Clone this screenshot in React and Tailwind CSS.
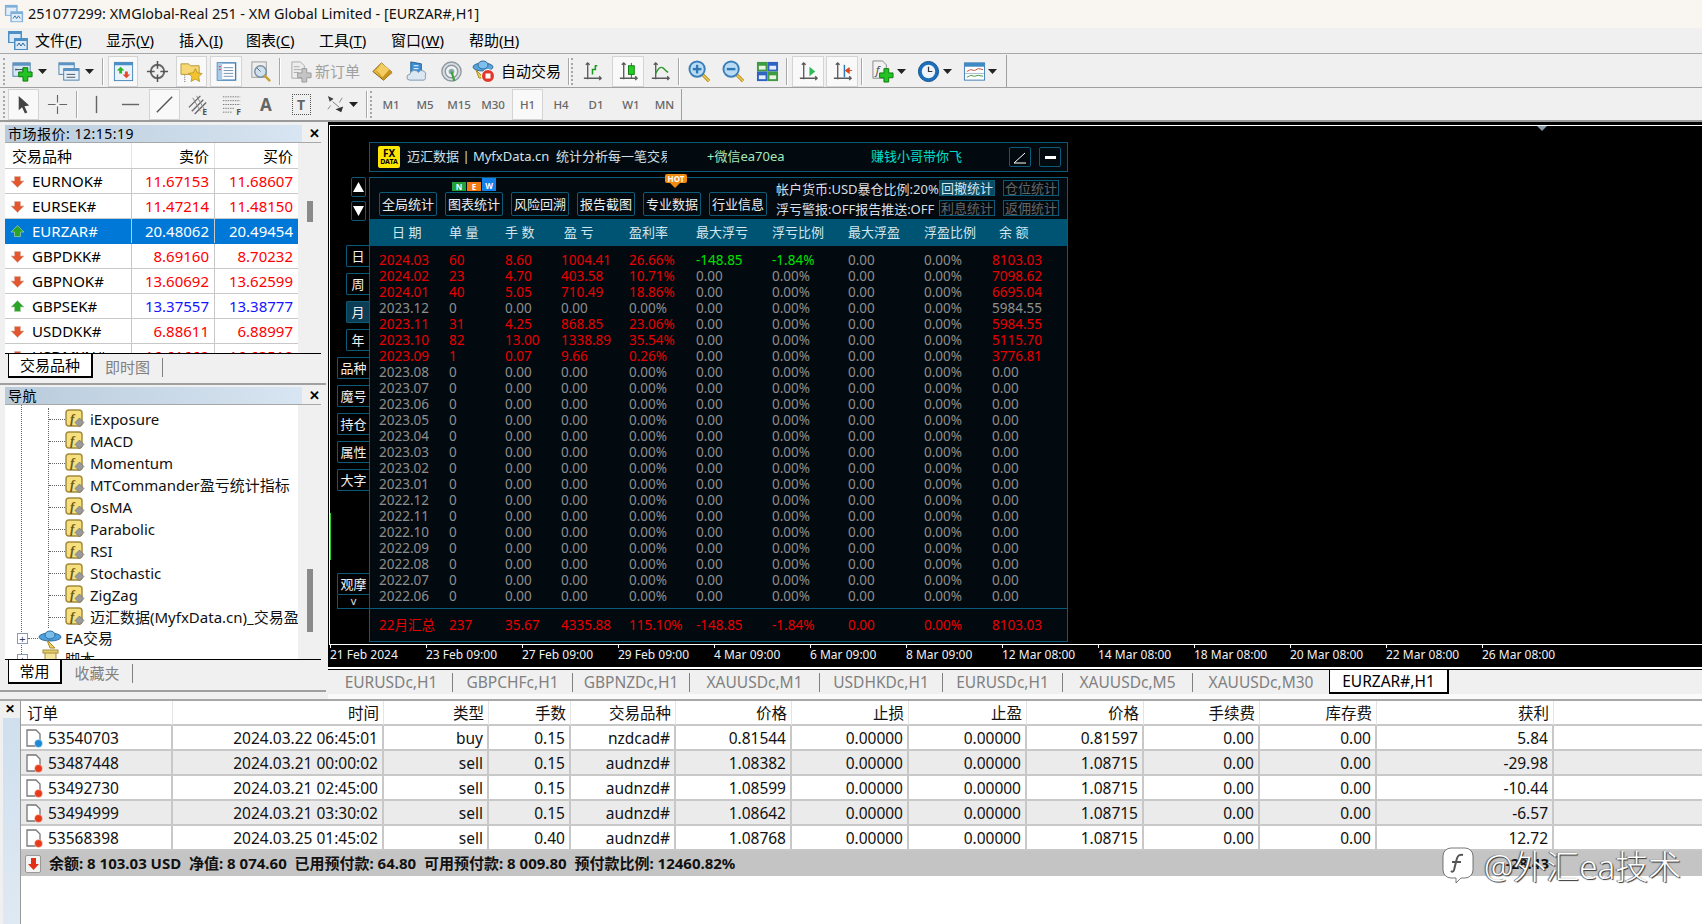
import React from "react";

const FONT = '"Noto Sans", "Noto Sans CJK SC", sans-serif';

const Svg = ({ s = 23, children, className = "" }) => (
  <svg width={s} height={s} viewBox="0 0 24 24" className={className} fill="none">{children}</svg>
);
const Caret = () => <svg width="9" height="5" viewBox="0 0 9 5"><path d="M0 0h9L4.5 5z" fill="#222" /></svg>;
const Plus = ({ x = 12, y = 12, c = "#22c322", d = "#0c7a0c" }) => (
  <path d={`M${x - 2.5} ${y - 7}h5v4.5h4.5v5h-4.5v4.5h-5v-4.5h-4.5v-5h4.5z`} fill={c} stroke={d} strokeWidth="1" />
);
const Axes = ({ children }) => (
  <Svg>
    <path d="M7 3v17M3 19h18M5 5l2-2 2 2M19 17l2 2-2 2" stroke="#5a5a5a" strokeWidth="1.4" />
    {children}
  </Svg>
);
const WinIcon = () => (
  <Svg>
    <rect x="2" y="3" width="18" height="14" fill="#d8e6f3" stroke="#4f81a8" />
    <rect x="2" y="3" width="18" height="3" fill="#5b93c5" />
    <path d="M5 10h7M5 9v2M12 9v2" stroke="#345" />
    <Plus x={15} y={15} />
  </Svg>
);
const ProfileIcon = () => (
  <Svg>
    <rect x="2" y="3" width="16" height="12" fill="#e8f0f8" stroke="#4f81a8" />
    <rect x="2" y="3" width="16" height="2.5" fill="#5b93c5" />
    <rect x="7" y="9" width="16" height="12" fill="#e8f0f8" stroke="#4f81a8" />
    <rect x="7" y="9" width="16" height="2.5" fill="#5b93c5" />
    <path d="M10 15h9M10 18h9" stroke="#456" />
  </Svg>
);
const MarketIcon = () => (
  <Svg>
    <rect x="2.5" y="2.5" width="19" height="19" fill="#eaf2fb" stroke="#4a86b8" />
    <rect x="2.5" y="2.5" width="19" height="3" fill="#4a90c8" />
    <path d="M9 7l4 4h-2.5v3h-3v-3H5z" fill="#2bb52b" />
    <path d="M15 19l-4-4h2.5v-3h3v3H19z" fill="#e8482a" />
  </Svg>
);
const CrossIcon = () => (
  <Svg>
    <circle cx="12" cy="12" r="7" stroke="#666" strokeWidth="2" />
    <path d="M12 1v8M12 15v8M1 12h8M15 12h8" stroke="#555" strokeWidth="1.6" />
  </Svg>
);
const FolderIcon = () => (
  <Svg>
    <path d="M1 4h8l2 2h9v9H1z" fill="#f7d774" stroke="#b79a3a" />
    <path d="M16 9l2.200 4.500 5 .6-3.700 3.400 1 5-4.500-2.500-4.500 2.500 1-5L8.800 14l5-.6z" fill="#f2c230" stroke="#a98716" strokeWidth=".7" />
    <path d="M5 16v7" stroke="#666" strokeDasharray="1 1" />
  </Svg>
);
const ListIcon = () => (
  <Svg>
    <rect x="2.5" y="3" width="19" height="18" fill="#fff" stroke="#3d7fb5" strokeWidth="1.4" />
    <rect x="2.5" y="3" width="5" height="18" fill="#a9cbe8" />
    <path d="M9 8h10M9 11h10M9 14h10M9 17h10" stroke="#7392b0" />
    <path d="M4 7h2M4 10h2" stroke="#d33" />
  </Svg>
);
const SearchGray = () => (
  <Svg>
    <rect x="3" y="2" width="15" height="16" fill="#eee" stroke="#999" />
    <circle cx="12" cy="12" r="6" fill="#cfe0ee" stroke="#7a8ea0" strokeWidth="1.500" />
    <path d="M16 16l6 6" stroke="#c9a030" strokeWidth="2.500" />
    <path d="M8 8l4 4" stroke="#667" />
  </Svg>
);
const OrderIcon = () => (
  <Svg>
    <path d="M3 2h9l4 4v13H3z" fill="#ededed" stroke="#aaa" />
    <path d="M5 7h6M5 10h8M5 13h5" stroke="#aaa" />
    <Plus x={16} y={16} c="#c4c4c4" d="#9a9a9a" />
  </Svg>
);
const DiamondIcon = () => (
  <Svg>
    <path d="M11 3l11 10-9 8L2 12z" fill="#e8b83a" stroke="#7d5a10" />
    <path d="M11 3L6 12l7 9 9-8z" fill="#c99322" />
    <path d="M11 3l8 7-7 8-6-7z" fill="#f3cd62" />
  </Svg>
);
const BookIcon = () => (
  <Svg>
    <path d="M5 2l11 2v12l-11-2z" fill="#3d8fd6" stroke="#26608f" />
    <path d="M8 6h5M8 9h5" stroke="#fff" />
    <path d="M4 21a3 3 0 010-6 5 5 0 019-2 4 4 0 017 4 3 3 0 01-1 4z" fill="#dbe7f1" stroke="#7e97ac" />
  </Svg>
);
const SignalIcon = () => (
  <Svg>
    <circle cx="12" cy="12" r="10" fill="#d9dee2" stroke="#8f9aa3" strokeWidth="1.500" />
    <circle cx="12" cy="12" r="6.500" fill="#f0f2f3" stroke="#8f9aa3" strokeWidth="1.500" />
    <circle cx="12" cy="12" r="3" fill="#8aa" />
    <path d="M12 12l3 10" stroke="#3aa33a" strokeWidth="2.200" />
  </Svg>
);
const AutoIcon = () => (
  <Svg s={24}>
    <ellipse cx="11" cy="8" rx="10" ry="4" fill="#5aa4dc" stroke="#2f6c9c" />
    <ellipse cx="11" cy="6" rx="5" ry="4" fill="#7fbfec" stroke="#2f6c9c" />
    <path d="M4 11l8 8h-5z" fill="#f0cf60" stroke="#a78a25" />
    <circle cx="16" cy="17" r="6.500" fill="#e0392b" stroke="#fff" />
    <rect x="13.500" y="14.500" width="5" height="5" fill="#fff" />
  </Svg>
);
const ZoomIcon = ({ minus }) => (
  <Svg>
    <path d="M14 14l8 8" stroke="#b58a1f" strokeWidth="3.500" />
    <path d="M14 14l8 8" stroke="#f0cd55" strokeWidth="1.500" />
    <circle cx="9.500" cy="9.500" r="8" fill="#b9dcf4" stroke="#3c7fb8" strokeWidth="2" />
    <path d="M5 9.500h9" stroke="#2f78b5" strokeWidth="2.500" />
    {!minus && <path d="M9.500 5v9" stroke="#2f78b5" strokeWidth="2.500" />}
  </Svg>
);
const TileIcon = () => (
  <Svg>
    <rect x="1" y="2" width="11" height="10" fill="#3f9b3f" />
    <rect x="12" y="2" width="11" height="10" fill="#2e63c4" />
    <rect x="1" y="12" width="11" height="10" fill="#2e63c4" />
    <rect x="12" y="12" width="11" height="10" fill="#3f9b3f" />
    <rect x="3" y="6" width="7" height="4" fill="#e9f3e4" />
    <rect x="14" y="6" width="7" height="4" fill="#e3ecf9" />
    <rect x="3" y="16" width="7" height="4" fill="#e3ecf9" />
    <rect x="14" y="16" width="7" height="4" fill="#e9f3e4" />
  </Svg>
);
const IndicatorIcon = () => (
  <Svg>
    <path d="M2 1h10l4 4v14H2z" fill="#f2f2f2" stroke="#888" />
    <text x="5" y="15" fontSize="12" fontStyle="italic" fill="#555">f</text>
    <Plus x={16} y={16} />
  </Svg>
);
const ClockIcon = () => (
  <Svg>
    <circle cx="12" cy="12" r="10.500" fill="#1b6fbd" stroke="#0f4f8c" />
    <circle cx="12" cy="12" r="7" fill="#eef4fa" />
    <path d="M12 7v5h4" stroke="#333" strokeWidth="1.300" />
  </Svg>
);
const TemplateIcon = () => (
  <Svg>
    <rect x="1.500" y="3" width="21" height="18" fill="#fff" stroke="#3f7fb5" />
    <rect x="1.500" y="3" width="21" height="4" fill="#3f8ac5" />
    <path d="M4 12l4-2 4 1 4-2 5 1" stroke="#c0503a" />
    <path d="M4 18l4-2 4 1 4-1 5 1" stroke="#3f9b3f" />
    <path d="M2 14h20" stroke="#a0b8cc" />
  </Svg>
);

const CursorIcon = () => <Svg><path d="M7 3l11 10-5 .8 3 6.500-2.500 1-3-6.500L7 18z" fill="#444" /></Svg>;
const Cross2 = () => <Svg><path d="M12 2v8M12 14v8M2 12h8M14 12h8" stroke="#666" strokeWidth="1.200" /></Svg>;
const VLine = () => <Svg><path d="M12 3v18" stroke="#666" strokeWidth="1.500" /></Svg>;
const HLine = () => <Svg><path d="M3 12h18" stroke="#666" strokeWidth="1.500" /></Svg>;
const TrendLine = () => <Svg><path d="M4 20L20 4" stroke="#555" strokeWidth="1.500" /></Svg>;
const ChanIcon = () => (
  <Svg>
    <path d="M2 15L14 3M5 19L17 7M8 22L20 10" stroke="#666" strokeWidth="1.400" />
    <path d="M6 5l8 14M10 3l8 14" stroke="#888" />
    <text x="16" y="23" fontSize="9" fontWeight="700" fill="#555">E</text>
  </Svg>
);
const FiboIcon = () => (
  <Svg>
    <path d="M2 4h18M2 8h18M2 12h18M2 16h12M2 20h10" stroke="#777" strokeDasharray="1.500 1" />
    <text x="16" y="23" fontSize="9" fontWeight="700" fill="#555">F</text>
  </Svg>
);
const TextA = () => <span className="text-[17px] font-bold text-[#666] leading-none">A</span>;
const TextT = () => (
  <span className="w-[19px] h-[21px] border border-dotted border-[#555] flex items-center justify-center text-[14px] font-bold text-[#666] leading-none">T</span>
);
const ArrowsIcon = () => (
  <Svg>
    <path d="M4 3l6 3-4 3z" fill="#444" />
    <path d="M9 9l7 6" stroke="#777" />
    <path d="M12 17l8-3-2 6z" fill="#333" />
    <path d="M19 5l-3 5M4 17l3-4" stroke="#888" />
  </Svg>
);

const UpArrow = ({ c = "#2aa52a" }) => <svg width="15" height="15" viewBox="0 0 15 15"><path d="M7.500 1.500L14 8h-3.500v4.500h-6V8H1z" fill={c} stroke="#a9cfa9" strokeWidth=".7" /></svg>;
const DownArrow = () => <svg width="15" height="15" viewBox="0 0 15 15"><path d="M7.500 13.500L1 7h3.500V2.500h6V7H14z" fill="#e4572e" stroke="#d8b5a8" strokeWidth=".7" /></svg>;

const Sep = ({ ml = "" }) => <div className={`w-[2px] h-[27px] border-l border-[#a8a8a8] bg-white shrink-0 ${ml}`} />;
const Grip = ({ ml = "" }) => <div className={`w-[3px] h-[27px] border-l-2 border-dotted border-[#a8a8a8] shrink-0 ${ml}`} />;
const Btn = ({ w, ml = "", sel, children }) => (
  <div className={`h-[31px] flex items-center justify-center shrink-0 ${w} ${ml} ${sel ? "bg-[#f9f9f9] border border-[#d4d4d4]" : ""}`}>{children}</div>
);
const CaretSlot = ({ ml = "" }) => <div className={`w-[10px] flex items-center justify-center shrink-0 ${ml}`}><Caret /></div>;

const Toolbar1 = () => (
  <div className="h-[34px] flex items-center border-b border-[#a0a0a0] bg-[#f0f0f0] pt-[1px]">
    <div className="w-[1007px] h-full flex items-center border-r border-[#a0a0a0] pl-[3px] shrink-0">
      <Grip />
      <Btn w="w-[28px]" ml="ml-[2px]"><WinIcon /></Btn>
      <CaretSlot ml="ml-[1px]" />
      <Btn w="w-[32px]" ml="ml-[5px]"><ProfileIcon /></Btn>
      <CaretSlot />
      <Sep ml="ml-[8px]" />
      <Btn w="w-[30px]" ml="ml-[4px]" sel><MarketIcon /></Btn>
      <Btn w="w-[38px]"><CrossIcon /></Btn>
      <Btn w="w-[31px]" sel><FolderIcon /></Btn>
      <Btn w="w-[32px]" ml="ml-[3px]" sel><ListIcon /></Btn>
      <Btn w="w-[35px]" ml="ml-[1px]"><SearchGray /></Btn>
      <Sep ml="ml-[1px]" />
      <Btn w="w-[28px]" ml="ml-[5px]"><OrderIcon /></Btn>
      <span className="text-[15px] text-[#a0a0a0] w-[50px] shrink-0 ml-[1px] whitespace-nowrap">新订单</span>
      <Btn w="w-[34px]"><DiamondIcon /></Btn>
      <Btn w="w-[34px]" ml="ml-[1px]"><BookIcon /></Btn>
      <Btn w="w-[34px]"><SignalIcon /></Btn>
      <Btn w="w-[34px]" ml="ml-[-1px]"><AutoIcon /></Btn>
      <span className="text-[15px] text-black w-[63px] shrink-0 whitespace-nowrap">自动交易</span>
      <Sep ml="ml-[4px]" />
      <Grip ml="ml-[1px]" />
      <Btn w="w-[34px]" ml="ml-[1px]"><Axes><path d="M12 15v-5h3V6h2" stroke="#1c9b1c" strokeWidth="1.600" /></Axes></Btn>
      <Btn w="w-[32px]" ml="ml-[3px]" sel><Axes><path d="M15 3v16" stroke="#1c7a1c" /><rect x="12" y="6" width="6" height="9" fill="#22d022" stroke="#127a12" /></Axes></Btn>
      <Btn w="w-[32px]"><Axes><path d="M7 14c3-6 5-7 7-6s3 3 6 5" stroke="#2e9a2e" strokeWidth="1.500" /></Axes></Btn>
      <Sep ml="ml-[2px]" />
      <Btn w="w-[34px]" ml="ml-[2px]"><ZoomIcon /></Btn>
      <Btn w="w-[34px]"><ZoomIcon minus /></Btn>
      <Btn w="w-[34px]"><TileIcon /></Btn>
      <Sep ml="ml-[2px]" />
      <Btn w="w-[32px]" ml="ml-[4px]" sel><Axes><path d="M13 7l6 5-6 5z" fill="#2dbb5a" /></Axes></Btn>
      <Btn w="w-[32px]" ml="ml-[2px]" sel><Axes><path d="M14 5v13" stroke="#2b78b5" strokeWidth="1.500" /><path d="M22 11l-7 0M15 11l4-3v6z" fill="#d9481e" stroke="#d9481e" /></Axes></Btn>
      <Sep ml="ml-[3px]" />
      <Btn w="w-[30px]" ml="ml-[4px]"><IndicatorIcon /></Btn>
      <CaretSlot ml="ml-[-1px]" />
      <Btn w="w-[32px]" ml="ml-[6px]"><ClockIcon /></Btn>
      <CaretSlot ml="ml-[-2px]" />
      <Btn w="w-[32px]" ml="ml-[6px]"><TemplateIcon /></Btn>
      <CaretSlot ml="ml-[-3px]" />
    </div>
  </div>
);

const TF = ({ t, w, ml = "", sel }) => (
  <Btn w={w} ml={ml} sel={sel}><span className="text-[11.500px] text-[#666] font-medium">{t}</span></Btn>
);
const Toolbar2 = () => (
  <div className="h-[34px] flex items-center border-b-2 border-[#9a9a9a] bg-[#f0f0f0] pt-[1px]">
    <div className="w-[682px] h-full flex items-center border-r border-[#a0a0a0] pl-[3px] shrink-0">
      <Grip />
      <Btn w="w-[31px]" ml="ml-[2px]" sel><CursorIcon /></Btn>
      <Btn w="w-[37px]"><Cross2 /></Btn>
      <Sep />
      <Btn w="w-[36px]"><VLine /></Btn>
      <Btn w="w-[32px]"><HLine /></Btn>
      <Btn w="w-[31px]" ml="ml-[3px]" sel><TrendLine /></Btn>
      <Btn w="w-[36px]"><ChanIcon /></Btn>
      <Btn w="w-[33px]"><FiboIcon /></Btn>
      <Btn w="w-[34px]"><TextA /></Btn>
      <Btn w="w-[36px]"><TextT /></Btn>
      <Btn w="w-[32px]"><ArrowsIcon /></Btn>
      <CaretSlot ml="ml-[-3px]" />
      <Sep ml="ml-[8px]" />
      <Grip ml="ml-[2px]" />
      <TF t="M1" w="w-[34px]" ml="ml-[1px]" />
      <TF t="M5" w="w-[34px]" />
      <TF t="M15" w="w-[34px]" />
      <TF t="M30" w="w-[34px]" />
      <TF t="H1" w="w-[31px]" ml="ml-[2px]" sel />
      <TF t="H4" w="w-[34px]" ml="ml-[1px]" />
      <TF t="D1" w="w-[34px]" ml="ml-[1px]" />
      <TF t="W1" w="w-[34px]" ml="ml-[1px]" />
      <TF t="MN" w="w-[33px]" />
    </div>
  </div>
);

const U = ({ children }) => <span className="underline">{children}</span>;
const Menu = () => (
  <div className="h-[26px] flex items-center border-b border-[#a8a8a8] bg-[#f0f0f0] text-[15px] text-black relative">
    <div className="w-[35px] flex justify-center shrink-0">
      <svg width="22" height="22" viewBox="0 0 22 22"><rect x="1" y="1" width="14" height="12" fill="#4d8fc7" /><rect x="2.500" y="4" width="11" height="8" fill="#dbe9f6" /><rect x="7" y="8" width="14" height="12" fill="#4d8fc7" /><rect x="8.500" y="11" width="11" height="8" fill="#dbe9f6" /><path d="M10 16l2-3 2 3 2-3 2 3" stroke="#2a6ca5" fill="none" /></svg>
    </div>
    <span className="w-[71px]">文件(<U>F</U>)</span>
    <span className="w-[73px]">显示(<U>V</U>)</span>
    <span className="w-[67px]">插入(<U>I</U>)</span>
    <span className="w-[73px]">图表(<U>C</U>)</span>
    <span className="w-[72px]">工具(<U>T</U>)</span>
    <span className="w-[78px]">窗口(<U>W</U>)</span>
    <span>帮助(<U>H</U>)</span>
  </div>
);

const PanelTitle = ({ children }) => (
  <div className="flex items-center h-[17px]">
    <div className="ml-[5px] w-[297px] h-[17px] bg-gradient-to-r from-[#b9cbdb] to-[#d8e5f2] text-[14px] leading-[17px] text-black pl-[3px] tracking-[0.5px]">{children}</div>
    <span className="w-[24px] text-center text-[13px] font-bold leading-none">✕</span>
  </div>
);
const Tabs = ({ active, aw, other, ow }) => (
  <div className="h-[24px] ml-[5px] mr-[5px] border-t border-black flex text-[15px] leading-[23px] bg-[#f0f0f0]">
    <div className={`ml-[3px] ${aw} h-[24px] bg-white border-l border-b-2 border-r-2 border-black text-center shrink-0`}>{active}</div>
    <div className={`${ow} text-center text-[#808080] border-r border-[#808080] h-[19px] mt-[4px] leading-[18px] shrink-0`}>{other}</div>
  </div>
);

const quotes = [
  ["EURNOK#", "11.67153", "11.68607", "d"],
  ["EURSEK#", "11.47214", "11.48150", "d"],
  ["EURZAR#", "20.48062", "20.49454", "s"],
  ["GBPDKK#", "8.69160", "8.70232", "d"],
  ["GBPNOK#", "13.60692", "13.62599", "d"],
  ["GBPSEK#", "13.37557", "13.38777", "u"],
  ["USDDKK#", "6.88611", "6.88997", "d"],
  ["USDMXN#", "16.61662", "16.63519", "d"],
];

const MarketWatch = () => (
  <div className="h-[263px] bg-[#f0f0f0] pt-[3px] flex flex-col border-b-2 border-[#a0a0a0]">
    <PanelTitle>市场报价: 12:15:19</PanelTitle>
    <div className="ml-[5px] mr-[5px] h-[211px] overflow-hidden bg-white flex border-t border-[#a8a8a8] shrink-0">
      <div className="w-[293px] shrink-0 text-[15px]">
        <div className="h-[26px] flex leading-[26px] border-b border-[#c8c8c8]">
          <div className="w-[127px] pl-[7px] border-r border-[#e4e4e4]">交易品种</div>
          <div className="w-[83px] text-right pr-[5px] border-r border-[#e4e4e4]">卖价</div>
          <div className="w-[83px] text-right pr-[5px]">买价</div>
        </div>
        {quotes.map(([n, a, b, k]) => {
          const sel = k === "s";
          const col = sel ? "text-white" : k === "u" ? "text-[#1414ff]" : "text-[#ff0000]";
          return (
            <div key={n} className={`h-[25px] flex leading-[24px] border-b ${sel ? "bg-[#0078d7] border-[#0078d7] text-white" : "border-[#c8c8c8]"}`}>
              <div className="w-[127px] flex items-center border-r border-[#c8c8c8]">
                <span className="w-[27px] pl-[5px] flex shrink-0">{k === "d" ? <DownArrow /> : <UpArrow />}</span>
                <span>{n}</span>
              </div>
              <div className={`w-[83px] text-right pr-[5px] border-r border-[#c8c8c8] ${col}`}>{a}</div>
              <div className={`w-[83px] text-right pr-[5px] ${col}`}>{b}</div>
            </div>
          );
        })}
      </div>
      <div className="flex-1 bg-[#f0f0f0] pt-[58px] pl-[9px]">
        <div className="w-[6px] h-[21px] bg-[#8a8a8a]" />
      </div>
    </div>
    <Tabs active="交易品种" aw="w-[85px]" other="即时图" ow="w-[70px]" />
  </div>
);

const FnIcon = () => (
  <svg width="20" height="20" viewBox="0 0 20 20" className="shrink-0">
    <rect x="1" y="1" width="16" height="16" rx="3" fill="#f6e07e" stroke="#a48c3c" strokeWidth="1.500" />
    <text x="5" y="14" fontSize="13" fontStyle="italic" fontWeight="700" fill="#6b5a1c" fontFamily="Liberation Serif">f</text>
    <path d="M14.500 9l4.500 4.500-4.500 4.500-4.500-4.500z" fill="#9a9a9a" stroke="#666" strokeWidth=".6" />
  </svg>
);
const indicators = ["iExposure", "MACD", "Momentum", "MTCommander盈亏统计指标", "OsMA", "Parabolic", "RSI", "Stochastic", "ZigZag", "迈汇数据(MyfxData.cn)_交易盈亏统计"];

const Navigator = () => (
  <div className="h-[307px] bg-[#f0f0f0] pt-[2px] flex flex-col border-b-2 border-[#a0a0a0]">
    <PanelTitle>导航</PanelTitle>
    <div className="ml-[5px] mr-[5px] h-[255px] overflow-hidden bg-white flex border-t border-[#a8a8a8] shrink-0">
      <div className="w-[293px] overflow-hidden text-[15px] shrink-0 text-[#111]">
        <div className="ml-[16px] border-l border-dotted border-[#666] pt-[3px]">
          <div className="ml-[26px] border-l border-dotted border-[#666]">
            {indicators.map((t) => (
              <div key={t} className="h-[22px] flex items-center whitespace-nowrap">
                <span className="w-[16px] border-t border-dotted border-[#666] shrink-0" />
                <FnIcon />
                <span className="ml-[5px]">{t}</span>
              </div>
            ))}
          </div>
          <div className="h-[21px] flex items-center ml-[-5px]">
            <span className="w-[11px] h-[11px] border border-[#8a9bb0] bg-white flex items-center justify-center text-[11px] leading-none text-[#345] shrink-0">+</span>
            <span className="w-[10px] border-t border-dotted border-[#666]" />
            <svg width="24" height="22" viewBox="0 0 24 22" className="shrink-0"><ellipse cx="12" cy="9" rx="11" ry="4" fill="#4f9fdc" stroke="#2d6da0" /><ellipse cx="12" cy="7" rx="5" ry="4" fill="#79bdeb" stroke="#2d6da0" /><path d="M9 12l8 8-5 0z" fill="#f0cf60" stroke="#a78a25" /></svg>
            <span className="ml-[3px]">EA交易</span>
          </div>
          <div className="h-[21px] flex items-center ml-[-5px]">
            <span className="w-[11px] h-[11px] border border-[#8a9bb0] bg-white flex items-center justify-center text-[11px] leading-none text-[#345] shrink-0">+</span>
            <span className="w-[10px] border-t border-dotted border-[#666]" />
            <svg width="24" height="22" viewBox="0 0 24 22" className="shrink-0"><rect x="7" y="2" width="11" height="16" fill="#f3e59b" stroke="#a48c3c" /><rect x="5" y="1" width="15" height="3" fill="#e6cf6b" stroke="#a48c3c" /></svg>
            <span className="ml-[3px]">脚本</span>
          </div>
        </div>
      </div>
      <div className="flex-1 bg-[#f0f0f0] pt-[164px] pl-[9px]">
        <div className="w-[6px] h-[63px] bg-[#8a8a8a]" />
      </div>
    </div>
    <Tabs active="常用" aw="w-[54px]" other="收藏夹" ow="w-[71px]" />
  </div>
);

const B = "border-[#0b5a78]";
const Side = ({ t, mt = "", w = "w-[23px]", sel }) => (
  <div className={`${w} h-[22px] ${mt} border-l border-t border-b ${B} rounded-l-[2px] flex items-center justify-center text-[13px] leading-none text-[#f0f0f0] ${sel ? "bg-[#0c3d55]" : ""}`}>{t}</div>
);
const PBtn = ({ t }) => (
  <div className={`w-[58px] h-[24px] border ${B} rounded-[2px] text-[13px] leading-[22px] text-center text-[#e8eef0] shrink-0`}>{t}</div>
);
const SBtn = ({ t, on }) => (
  <div className={`w-[56px] h-[16px] border ${B} text-[13px] leading-[14px] text-center ${on ? "bg-[#0c4a63] text-[#d5e6ee]" : "text-[#666666]"}`}>{t}</div>
);

const COLS = "grid grid-cols-[70px_56px_56px_68px_67px_76px_76px_76px_68px_1fr]";
const g = "text-[#8e8e8e]";
const r = "text-[#e80000]";
const rows = [
  ["2024.03", "60", "8.60", "1004.41", "26.66%", "-148.85", "-1.84%", "0.00", "0.00%", "8103.03"],
  ["2024.02", "23", "4.70", "403.58", "10.71%", "0.00", "0.00%", "0.00", "0.00%", "7098.62"],
  ["2024.01", "40", "5.05", "710.49", "18.86%", "0.00", "0.00%", "0.00", "0.00%", "6695.04"],
  ["2023.12", "0", "0.00", "0.00", "0.00%", "0.00", "0.00%", "0.00", "0.00%", "5984.55"],
  ["2023.11", "31", "4.25", "868.85", "23.06%", "0.00", "0.00%", "0.00", "0.00%", "5984.55"],
  ["2023.10", "82", "13.00", "1338.89", "35.54%", "0.00", "0.00%", "0.00", "0.00%", "5115.70"],
  ["2023.09", "1", "0.07", "9.66", "0.26%", "0.00", "0.00%", "0.00", "0.00%", "3776.81"],
  ...["2023.08", "2023.07", "2023.06", "2023.05", "2023.04", "2023.03", "2023.02", "2023.01", "2022.12", "2022.11", "2022.10", "2022.09", "2022.08", "2022.07", "2022.06"].map((d) => [d, "0", "0.00", "0.00", "0.00%", "0.00", "0.00%", "0.00", "0.00%", "0.00"]),
];

const cellColor = (row, ri, ci) => {
  if (ri === 0 && (ci === 5 || ci === 6)) return "text-[#00e000]";
  const active = row[1] !== "0";
  if (active && ci < 5) return r;
  if (ci === 9 && row[9] !== "0.00" && ri !== 3) return r;
  return g;
};

const heads = [
  ["日 期", "pl-[13px]"], ["单 量", "pl-0"], ["手 数", "pl-0"], ["盈 亏", "pl-[3px]"], ["盈利率", "pl-0"],
  ["最大浮亏", "pl-0"], ["浮亏比例", "pl-0"], ["最大浮盈", "pl-0"], ["浮盈比例", "pl-0"], ["余 额", "pl-[7px]"],
];

const Overlay = () => (
  <div className="flex flex-col pt-[16px]">
    <div className={`ml-[39px] w-[699px] h-[30px] border ${B} bg-[#020a10] flex items-center text-[13px] whitespace-nowrap`}>
      <div className="ml-[8px] w-[22px] h-[22px] bg-[#ffe600] rounded-[2px] flex flex-col items-center justify-center font-bold text-black leading-none shrink-0">
        <span className="text-[10px] leading-[10px]">FX</span>
        <span className="text-[7px] leading-[8px]">DATA</span>
      </div>
      <div className="ml-[7px] w-[260px] overflow-hidden text-[#cfe0e8] shrink-0">迈汇数据 | MyfxData.cn &nbsp;统计分析每一笔交易盈亏</div>
      <div className="ml-[40px] w-[164px] text-[#a6e8b8] shrink-0">+微信ea70ea</div>
      <div className="text-[#00e0d0] w-[92px] shrink-0">赚钱小哥带你飞</div>
      <div className={`ml-[46px] w-[22px] h-[20px] border ${B} rounded-[2px] flex items-center justify-center shrink-0`}>
        <svg width="14" height="14" viewBox="0 0 14 14"><path d="M1 13h12M1 13L12 3" stroke="#fff" /></svg>
      </div>
      <div className={`ml-[8px] w-[22px] h-[20px] border ${B} rounded-[2px] flex items-center justify-center shrink-0`}>
        <span className="w-[11px] h-[3px] bg-white" />
      </div>
    </div>
    <div className="flex mt-[5px]">
      <div className="w-[39px] shrink-0 flex flex-col items-end">
        <div className={`w-[15px] h-[20px] mr-[3px] border ${B} rounded-[2px] flex items-center justify-center`}><svg width="11" height="10" viewBox="0 0 11 10"><path d="M5.500 0L11 10H0z" fill="#fff" /></svg></div>
        <div className={`w-[15px] h-[20px] mr-[3px] mt-[4px] border ${B} rounded-[2px] flex items-center justify-center`}><svg width="11" height="10" viewBox="0 0 11 10"><path d="M5.500 10L11 0H0z" fill="#fff" /></svg></div>
        <Side t="日" mt="mt-[24px]" />
        <Side t="周" mt="mt-[6px]" />
        <Side t="月" mt="mt-[6px]" sel />
        <Side t="年" mt="mt-[6px]" />
        <Side t="品种" w="w-[32px]" mt="mt-[6px]" />
        <Side t="魔号" w="w-[32px]" mt="mt-[6px]" />
        <Side t="持仓" w="w-[32px]" mt="mt-[6px]" />
        <Side t="属性" w="w-[32px]" mt="mt-[6px]" />
        <Side t="大字" w="w-[32px]" mt="mt-[6px]" />
        <Side t="观摩" w="w-[32px]" mt="mt-[82px]" />
        <div className={`w-[32px] h-[14px] border-l border-b ${B} text-[11px] leading-[11px] text-center text-[#e0e0e0]`}>v</div>
      </div>
      <div className={`w-[699px] h-[465px] border ${B} bg-[#020a10] shrink-0 text-[13.5px] whitespace-nowrap`}>
        <div className="h-[41px] flex items-start pl-[9px] pt-[14px] relative">
          <PBtn t="全局统计" />
          <div className="ml-[8px] relative"><PBtn t="图表统计" />
            <div className="absolute left-[7px] top-[-14px] flex items-end text-[8px] font-bold leading-[9px] text-white text-center">
              <span className="w-[14px] h-[9px] bg-[#22a03a]">N</span>
              <span className="w-[14px] h-[9px] ml-[1px] bg-[#f07b10]">E</span>
              <span className="w-[14px] h-[13px] ml-[1px] bg-[#1280e8] leading-[16px]">W</span>
            </div>
          </div>
          <div className="ml-[8px]"><PBtn t="风险回溯" /></div>
          <div className="ml-[8px]"><PBtn t="报告截图" /></div>
          <div className="ml-[8px] relative"><PBtn t="专业数据" />
            <div className="absolute left-[22px] top-[-18px] w-[22px] h-[9px] bg-[#f08a10] rounded-[2px] text-[8px] font-bold leading-[9px] text-center text-white">HOT</div>
            <div className="absolute left-[27px] top-[-9px] w-0 h-0 border-l-[5px] border-r-[5px] border-t-[5px] border-l-transparent border-r-transparent border-t-[#f08a10]" />
          </div>
          <div className="ml-[8px]"><PBtn t="行业信息" /></div>
          <div className="ml-[9px] mt-[-13px] w-[162px] text-[13px] leading-[20px] text-[#d7dfe3] shrink-0">
            <div className="h-[20px]">帐户货币:USD暴仓比例:20%</div>
            <div className="h-[20px]">浮亏警报:OFF报告推送:OFF</div>
          </div>
          <div className="mt-[-12px] ml-[1px] grid grid-cols-[56px_56px] gap-x-[8px] gap-y-[4px]">
            <SBtn t="回撤统计" on />
            <SBtn t="仓位统计" />
            <SBtn t="利息统计" />
            <SBtn t="返佣统计" />
          </div>
        </div>
        <div className={`${COLS} h-[27px] bg-[#005473] items-center pl-[9px] text-[13px] text-[#d2e6ee]`}>
          {heads.map(([h, p]) => <div key={h} className={p}>{h}</div>)}
        </div>
        <div className="pt-[6px] h-[362px]">
          {rows.map((row, ri) => (
            <div key={row[0]} className={`${COLS} h-[16px] pl-[9px] leading-[16px]`}>
              {row.map((c, ci) => <div key={ci} className={cellColor(row, ri, ci)}>{c}</div>)}
            </div>
          ))}
        </div>
        <div className={`${COLS} h-[33px] border-t ${B} pl-[9px] items-center text-[#e80000]`}>
          {["22月汇总", "237", "35.67", "4335.88", "115.10%", "-148.85", "-1.84%", "0.00", "0.00%", "8103.03"].map((c, i) => <div key={i}>{c}</div>)}
        </div>
      </div>
    </div>
  </div>
);

const times = ["21 Feb 2024", "23 Feb 09:00", "27 Feb 09:00", "29 Feb 09:00", "4 Mar 09:00", "6 Mar 09:00", "8 Mar 09:00", "12 Mar 08:00", "14 Mar 08:00", "18 Mar 08:00", "20 Mar 08:00", "22 Mar 08:00", "26 Mar 08:00"];

const Chart = () => (
  <div className="h-[545px] bg-black flex flex-col relative overflow-hidden">
    <div className="h-[3px] shrink-0" />
    <div className="flex-1 border-t border-l border-white ml-[1px] relative min-h-0">
      <Overlay />
      <div className="absolute left-0 top-[387px] w-[1px] h-[47px] bg-[#2ed02e]" />
      <div className="absolute left-[1207px] top-[0px] w-0 h-0 border-l-[5px] border-r-[5px] border-t-[5px] border-l-transparent border-r-transparent border-t-[#8a9aa8]" />
    </div>
    <div className="h-[23px] border-t border-white ml-[1px] flex shrink-0">
      {times.map((t) => (
        <div key={t} className="w-[96px] shrink-0 relative text-[12px] leading-[20px] text-[#f0f0f0] pl-[1px] whitespace-nowrap">
          <span className="absolute left-[1px] top-0 w-[1px] h-[3px] bg-white" />
          {t}
        </div>
      ))}
    </div>
  </div>
);

const chartTabs = [
  ["EURUSDc,H1", "w-[123px]"], ["GBPCHFc,H1", "w-[120px]"], ["GBPNZDc,H1", "w-[117px]"], ["XAUUSDc,M1", "w-[130px]"],
  ["USDHKDc,H1", "w-[123px]"], ["EURUSDc,H1", "w-[120px]"], ["XAUUSDc,M5", "w-[130px]"],
];
const TabBar = () => (
  <div className="h-[32px] flex flex-col bg-[#f0f0f0] shrink-0">
    <div className="h-[2px] bg-white shrink-0" />
    <div className="h-[25px] flex text-[15.500px] border-t border-black">
      <div className="flex pl-[2px]">
        {chartTabs.map(([t, w], i) => (
          <div key={i} className={`${w} h-[19px] mt-[3px] border-r border-[#808080] text-center leading-[18px] text-[#808080] shrink-0`}>{t}</div>
        ))}
        <div className="w-[136px] leading-[24px] text-center text-[#808080] shrink-0">XAUUSDc,M30</div>
      </div>
      <div className="w-[120px] h-[24px] bg-white border-l border-r-2 border-b-2 border-black text-center leading-[23px] text-black shrink-0">EURZAR#,H1</div>
    </div>
    <div className="flex-1 bg-[#fafafa]" />
  </div>
);

const COL_T = "grid grid-cols-[152px_211px_105px_82px_105px_116px_117px_118px_117px_116px_117px_177px]";
const hdr = ["订单", "时间", "类型", "手数", "交易品种", "价格", "止损", "止盈", "价格", "手续费", "库存费", "获利"];
const orders = [
  ["53540703", "2024.03.22 06:45:01", "buy", "0.15", "nzdcad#", "0.81544", "0.00000", "0.00000", "0.81597", "0.00", "0.00", "5.84"],
  ["53487448", "2024.03.21 00:00:02", "sell", "0.15", "audnzd#", "1.08382", "0.00000", "0.00000", "1.08715", "0.00", "0.00", "-29.98"],
  ["53492730", "2024.03.21 02:45:00", "sell", "0.15", "audnzd#", "1.08599", "0.00000", "0.00000", "1.08715", "0.00", "0.00", "-10.44"],
  ["53494999", "2024.03.21 03:30:02", "sell", "0.15", "audnzd#", "1.08642", "0.00000", "0.00000", "1.08715", "0.00", "0.00", "-6.57"],
  ["53568398", "2024.03.25 01:45:02", "sell", "0.40", "audnzd#", "1.08768", "0.00000", "0.00000", "1.08715", "0.00", "0.00", "12.72"],
];
const OrderDoc = ({ c }) => (
  <svg width="19" height="20" viewBox="0 0 19 20" className="shrink-0">
    <path d="M2 2h9l4 4v12H2z" fill="#fff" stroke="#777" strokeWidth="1.300" />
    <circle cx="13.500" cy="15.500" r="4" fill={c} stroke="#fff" strokeWidth=".5" />
  </svg>
);

const Terminal = () => (
  <div className="flex-1 flex border-t-2 border-[#a8a8a8] bg-white min-h-0 relative">
    <div className="w-[20px] shrink-0 bg-[#f0f0f0] flex flex-col">
      <div className="h-[17px] text-[12px] font-bold text-center leading-[14px] pt-[1px]">✕</div>
      <div className="flex-1 ml-[3px] bg-gradient-to-b from-[#cfdfee] to-[#dfe9f3]" />
    </div>
    <div className="flex-1 text-[15.500px] text-[#111] min-w-0 border-l border-[#9a9a9a]">
      <div className={`${COL_T} h-[25px] leading-[24px] border-b-2 border-[#c8c8c8]`}>
        {hdr.map((h, i) => (
          <div key={i} className={`pr-[4px] border-r border-[#e4e4e4] relative ${i === 0 ? "text-left pl-[6px]" : "text-right"}`}>
            {h}
            {i === 8 && <span className="absolute right-[8px] top-[-2px] text-[10px] text-[#777]">/</span>}
          </div>
        ))}
      </div>
      {orders.map((o, ri) => (
        <div key={o[0]} className={`${COL_T} h-[25px] leading-[21px] border-b-2 border-[#c8c8c8] ${ri % 2 ? "bg-[#ebebeb]" : "bg-white"}`}>
          {o.map((c, i) => i === 0 ? (
            <div key={i} className="flex items-center border-r-2 border-[#c8c8c8] pl-[4px] gap-[4px]"><OrderDoc c={ri === 0 ? "#1e8ad6" : "#e63c1c"} /><span className="pt-[2px]">{c}</span></div>
          ) : (
            <div key={i} className="text-right pr-[4px] pt-[2px] border-r-2 border-[#c8c8c8]">{c}</div>
          ))}
        </div>
      ))}
      <div className="h-[25px] bg-[#c4c4c4] flex items-center font-bold leading-none whitespace-nowrap text-[15px]">
        <div className="w-[1533px] flex items-center pr-[5px] shrink-0">
          <div className="w-[16px] h-[18px] ml-[4px] bg-[#f4f4f4] border border-[#999] rounded-[2px] flex items-center justify-center shrink-0">
            <svg width="11" height="12" viewBox="0 0 11 12"><path d="M5.500 12L0 6h3V0h5v6h3z" fill="#e03018" /></svg>
          </div>
          <span className="ml-[8px] flex-1 whitespace-pre">余额: 8 103.03 USD  净值: 8 074.60  已用预付款: 64.80  可用预付款: 8 009.80  预付款比例: 12460.82%</span>
          <span>-28.43</span>
        </div>
      </div>
    </div>
    <div className="absolute left-[1441px] top-[145px] flex items-center gap-[9px] text-[33px] font-light text-white leading-none [text-shadow:1px_1px_1px_#333,-1px_0_1px_#555]">
      <svg width="34" height="40" viewBox="0 0 34 40"><path d="M10 2h14a8 8 0 018 8v14a8 8 0 01-8 8h-4l-5 5v-5H10a8 8 0 01-8-8V10a8 8 0 018-8z" fill="#fff" stroke="#555" strokeWidth=".8" /><path d="M22 9c-5-1-6 2-7 7l-2 8c-.6 2-2 2-3 1M11 16h9" stroke="#555" strokeWidth="2" fill="none" /></svg>
      <span>@外汇ea技术</span>
    </div>
  </div>
);

export default function App() {
  return (
    <div className="w-[1702px] h-[924px] flex flex-col overflow-hidden bg-[#f0f0f0]" style={{ fontFamily: FONT }}>
      <div className="h-[28px] flex items-center bg-[#f9f5f0] shrink-0 text-[14.400px] text-[#111]">
        <div className="w-[28px] flex justify-center shrink-0">
          <svg width="20" height="20" viewBox="0 0 22 22"><rect x="1" y="1" width="14" height="12" fill="#7fb0da" /><rect x="2.500" y="4" width="11" height="8" fill="#e4eef8" /><rect x="7" y="8" width="14" height="12" fill="#7fb0da" /><rect x="8.500" y="11" width="11" height="8" fill="#e4eef8" /><path d="M10 16l2-3 2 3 2-3 2 3" stroke="#2a6ca5" fill="none" /></svg>
        </div>
        <span>251077299: XMGlobal-Real 251 - XM Global Limited - [EURZAR#,H1]</span>
      </div>
      <Menu />
      <Toolbar1 />
      <Toolbar2 />
      <div className="h-[577px] flex shrink-0">
        <div className="w-[328px] shrink-0 flex flex-col border-r-2 border-[#f0f0f0]">
          <MarketWatch />
          <Navigator />
        </div>
        <div className="flex-1 min-w-0 flex flex-col">
          <Chart />
          <TabBar />
        </div>
      </div>
      <Terminal />
    </div>
  );
}
